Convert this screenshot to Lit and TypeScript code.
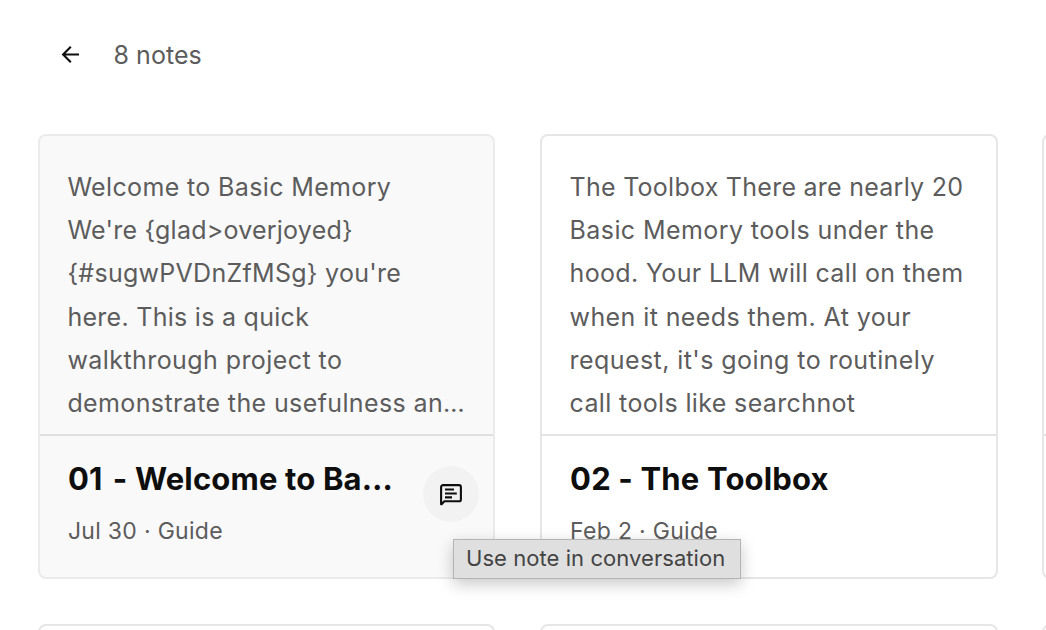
import { LitElement, html, css, svg } from 'lit';
import { customElement, property } from 'lit/decorators.js';

interface Line {
  text: string;
  spacing: number;
}

interface Note {
  number: string;
  numberGap: number;
  title: string;
  meta: string;
  lines: Line[];
  hovered?: boolean;
}

const emptyNote: Note = { number: '', numberGap: 0, title: '', meta: '', lines: [] };

const notes: Note[] = [
  {
    number: '01',
    numberGap: 2.8,
    title: ' - Welcome to Ba…',
    meta: 'Jul 30 · Guide',
    hovered: true,
    lines: [
      { text: 'Welcome to Basic Memory', spacing: 0.36 },
      { text: "We're {glad>overjoyed}", spacing: 0.23 },
      { text: "{#sugwPVDnZfMSg} you're", spacing: 0.28 },
      { text: 'here. This is a quick', spacing: 0.28 },
      { text: 'walkthrough project to', spacing: 0.43 },
      { text: 'demonstrate the usefulness an…', spacing: 0.38 },
    ],
  },
  {
    number: '02',
    numberGap: 0,
    title: ' - The Toolbox',
    meta: 'Feb 2 · Guide',
    lines: [
      { text: 'The Toolbox There are nearly 20', spacing: 0.26 },
      { text: 'Basic Memory tools under the', spacing: 0.41 },
      { text: 'hood. Your LLM will call on them', spacing: 0.34 },
      { text: 'when it needs them. At your', spacing: 0.4 },
      { text: "request, it's going to routinely", spacing: 0.42 },
      { text: 'call tools like searchnot', spacing: 0.36 },
    ],
  },
  emptyNote,
  emptyNote,
  emptyNote,
  emptyNote,
];

const arrowIcon = svg`
  <path d="M18 9.5H2.3M9.8 1.8L2.1 9.5L9.8 17.2" />
`;

const noteIcon = svg`
  <path d="M1.1 20.2V3a1.9 1.9 0 0 1 1.9-1.9h16a1.9 1.9 0 0 1 1.9 1.9v12.4a1.9 1.9 0 0 1-1.9 1.9H4.4L1.6 20.2z" />
  <path d="M5 5.5h9M5 9.5h11.8M5 13.4h7" />
`;

@customElement('note-card')
export class NoteCard extends LitElement {
  @property({ attribute: false }) note!: Note;

  static styles = css`
    :host { display: block; }

    .card {
      box-sizing: border-box;
      height: 445px;
      border: 2px solid #e6e6e6;
      border-radius: 8px;
      background: #fff;
      overflow: hidden;
    }

    .card.hovered {
      background: #f9f9f9;
      border-color: #ebebeb;
    }

    .preview {
      box-sizing: border-box;
      height: 300px;
      padding: 30px 0 0 27.5px;
      border-bottom: 2px solid #e4e4e4;
    }

    .hovered .preview { border-bottom-color: #e0e0e0; }

    .line {
      font-size: 25px;
      line-height: 43.2px;
      color: #5c5c5c;
      white-space: nowrap;
    }

    .footer {
      display: flex;
      justify-content: space-between;
      padding: 22px 14px 0 28px;
    }

    .title {
      font-size: 31px;
      line-height: 42px;
      font-weight: 700;
      letter-spacing: 0.16px;
      color: #0e0e0e;
      white-space: pre;
    }

    .meta {
      margin-top: 14px;
      font-size: 23px;
      line-height: 34px;
      letter-spacing: 0.3px;
      color: #5c5c5c;
      white-space: nowrap;
    }

    .action {
      display: flex;
      align-items: center;
      justify-content: center;
      flex: none;
      box-sizing: border-box;
      width: 56px;
      height: 56px;
      margin-top: 8px;
      padding: 2px 0 0;
      border: 0;
      border-radius: 50%;
      background: #f2f2f2;
    }

    .action svg {
      fill: none;
      stroke: #0e0e0e;
      stroke-width: 2.1;
      stroke-linejoin: round;
    }
  `;

  render() {
    const { number, numberGap, title, meta, lines, hovered } = this.note;
    return html`
      <article class="card ${hovered ? 'hovered' : ''}">
        <div class="preview">
          ${lines.map((line) => html`
            <div class="line" style="letter-spacing: ${line.spacing}px">${line.text}</div>
          `)}
        </div>
        <div class="footer">
          <div>
            <div class="title"><span style="margin-right: ${numberGap}px">${number}</span>${title}</div>
            <div class="meta">${meta}</div>
          </div>
          ${hovered ? html`
            <button class="action" aria-label="Use note in conversation">
              <svg width="22" height="22" viewBox="0 0 22 22">${noteIcon}</svg>
            </button>
          ` : ''}
        </div>
      </article>
    `;
  }
}

@customElement('app-root')
export class AppRoot extends LitElement {
  static styles = css`
    :host {
      display: block;
      position: relative;
      width: 1046px;
      height: 630px;
      overflow: hidden;
      background: #fff;
      font-family: Inter, "Liberation Sans", sans-serif;
    }

    .header {
      display: flex;
      align-items: center;
      gap: 33.5px;
      box-sizing: border-box;
      height: 134px;
      padding: 0 0 25px 61px;
    }

    .header svg {
      fill: none;
      stroke: #0e0e0e;
      stroke-width: 2.1;
    }

    .count {
      font-size: 25px;
      letter-spacing: 0.04px;
      color: #5c5c5c;
    }

    .grid {
      display: grid;
      grid-template-columns: repeat(3, 457.5px);
      gap: 45px 44.7px;
      padding-left: 37.9px;
    }

    .tooltip {
      position: absolute;
      left: 453px;
      top: 539px;
      box-sizing: border-box;
      width: 288px;
      height: 40px;
      padding-left: 12px;
      border: 1px solid #b4b4b4;
      background: #dfdfdf;
      box-shadow: 0 5px 16px rgba(0, 0, 0, 0.22);
      font-size: 22px;
      line-height: 37px;
      letter-spacing: 0.06px;
      color: #444;
      white-space: nowrap;
    }
  `;

  render() {
    return html`
      <header class="header">
        <svg width="19" height="19" viewBox="0 0 19 19">${arrowIcon}</svg>
        <span class="count">8 notes</span>
      </header>
      <main class="grid">
        ${notes.map((note) => html`<note-card .note=${note}></note-card>`)}
      </main>
      <div class="tooltip" role="tooltip">Use note in conversation</div>
    `;
  }
}
